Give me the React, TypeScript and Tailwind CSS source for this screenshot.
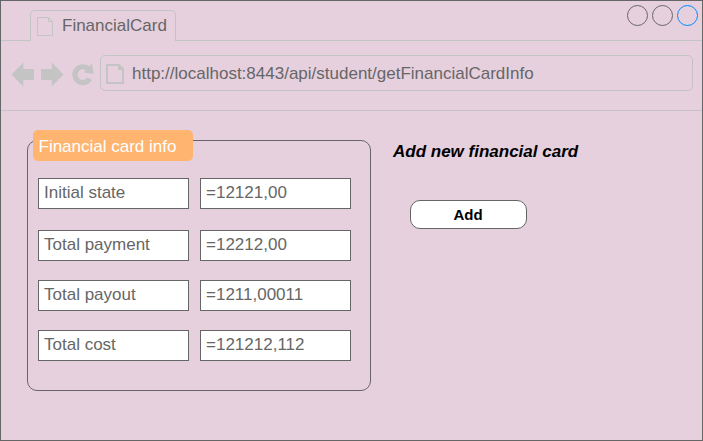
const FONT = "font-['Liberation_Sans',Arial,sans-serif]";

function PageIcon({ className, width, height, stroke }: { className: string; width: number; height: number; stroke: number }) {
  const w = width - stroke / 2;
  const h = height - stroke / 2;
  const o = stroke / 2;
  return (
    <svg className={className} width={width} height={height} fill="none" stroke="#c4c4c4" strokeWidth={stroke}>
      <path d={`M${o} ${o}H${w - 4}L${w} ${o + 4}V${h}H${o}ZM${w - 4} ${o}V${o + 4}H${w}`} />
    </svg>
  );
}

function Arrow({ flip }: { flip?: boolean }) {
  return (
    <svg className={flip ? "-scale-x-100" : ""} width="23" height="25" fill="#c4c4c4">
      <path d="M0.5 12.5L12.3 0.5V7H23V18H12.3V24.5Z" />
    </svg>
  );
}

function Field({ text, className }: { text: string; className: string }) {
  return (
    <div className={`h-[31px] border border-[#666666] bg-white pl-[5px] text-[17px] leading-[27px] text-[#666666] ${className}`}>
      {text}
    </div>
  );
}

const rows = [
  { label: "Initial state", value: "=12121,00", gap: "" },
  { label: "Total payment", value: "=12212,00", gap: "mt-[21px]" },
  { label: "Total payout", value: "=1211,00011", gap: "mt-[19px]" },
  { label: "Total cost", value: "=121212,112", gap: "mt-[19px]" },
];

export default function App() {
  return (
    <div className={`flex h-[441px] w-[703px] flex-col overflow-hidden border border-[#666666] bg-[#e6d0de] ${FONT}`}>
      <header className="flex h-10 justify-between border-b border-[#c4c4c4] pr-1 pl-[29px]">
        <div className="mt-[9px] flex h-[31px] w-[146px] rounded-t-[5px] border border-b-0 border-[#c4c4c4] bg-[#e6d0de] pl-1.5">
          <PageIcon className="mt-1.5 shrink-0" width={16} height={19} stroke={1} />
          <span className="ml-[9px] text-[17px] leading-[30px] text-[#666666]">FinancialCard</span>
        </div>
        <div className="mt-1 flex gap-1">
          <div className="size-[21px] rounded-full border border-[#666666]" />
          <div className="size-[21px] rounded-full border border-[#666666]" />
          <div className="size-[21px] rounded-full border border-[#008cff]" />
        </div>
      </header>

      <nav className="flex h-[70px] shrink-0 border-b border-[#c4c4c4] pt-3.5 pl-[10px]">
        <div className="flex shrink-0 gap-[7px] pt-[7px]">
          <Arrow />
          <Arrow flip />
          <svg width="23" height="25" fill="none">
            <path d="M17.6 7.2A7.9 7.9 0 1 0 18.7 16.6" stroke="#c4c4c4" strokeWidth="5.2" />
            <path d="M21 1.7L22.7 12L12.8 10.2Z" fill="#c4c4c4" />
          </svg>
        </div>
        <div className="ml-[6px] flex h-9 w-[593px] shrink-0 rounded-[5px] border border-[#c4c4c4] pl-[5px]">
          <PageIcon className="mt-2 shrink-0" width={18} height={20} stroke={2} />
          <span className="ml-[8px] text-[17px] leading-[35px] text-[#666666]">http://localhost:8443/api/student/getFinancialCardInfo</span>
        </div>
      </nav>

      <main className="flex items-start pt-[19px] pl-[26px]">
        <section className="relative mt-[10px] h-[251px] w-[344px] rounded-[10px] border border-[#666666] pt-[37px] pl-[10px]">
          <h2 className="absolute -top-[11px] left-[5px] h-[31px] w-[160px] rounded-[5px] bg-[#ffb570] pl-[5.5px] text-[17px] leading-[33px] text-white">
            Financial card info
          </h2>
          {rows.map((row) => (
            <div key={row.label} className={`flex gap-[11px] ${row.gap}`}>
              <Field text={row.label} className="w-[151px]" />
              <Field text={row.value} className="w-[151px]" />
            </div>
          ))}
        </section>
        <section className="ml-[22px] pt-[10px]">
          <h2 className="text-[17px] leading-[23px] font-bold text-black italic">Add new financial card</h2>
          <button className="mt-[37px] ml-[17px] block h-[29px] w-[117px] rounded-[10px] border border-[#666666] bg-white pr-[1px] text-center text-[15px] leading-[28px] font-bold text-black">
            Add
          </button>
        </section>
      </main>
    </div>
  );
}
